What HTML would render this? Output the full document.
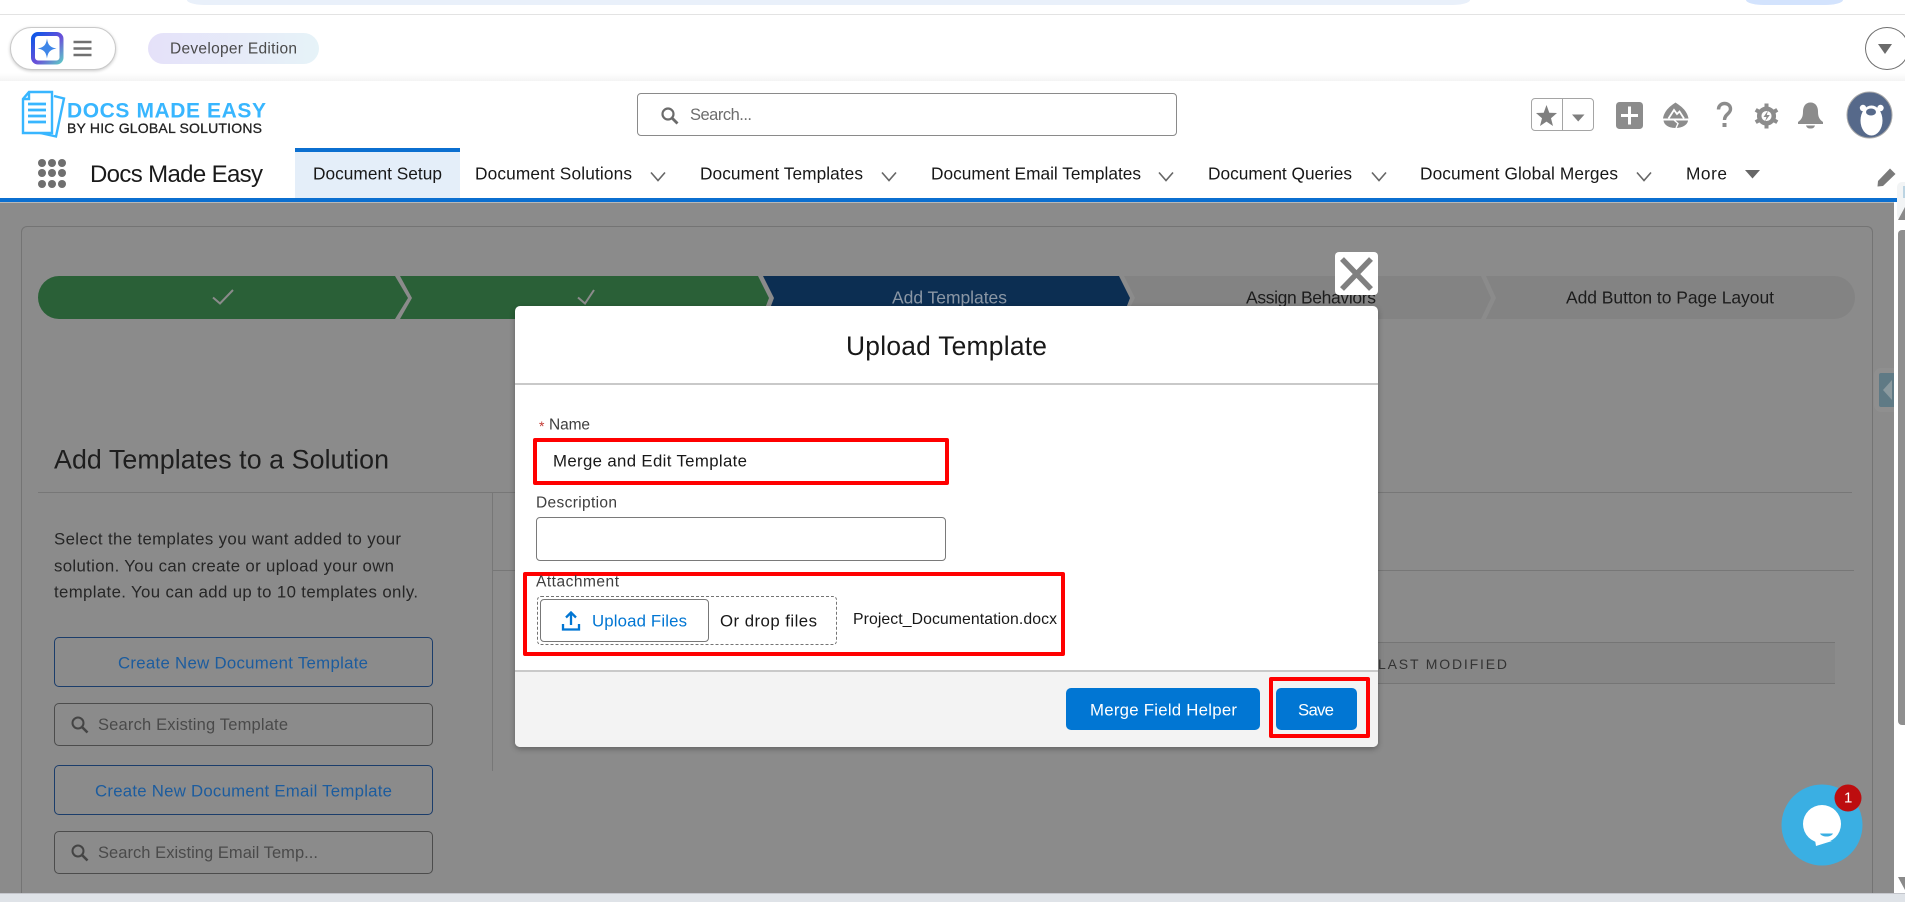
<!DOCTYPE html>
<html><head><meta charset="utf-8"><title>Upload Template</title>
<style>
html,body{margin:0;padding:0;width:1905px;height:902px;overflow:hidden;background:#fff;font-family:"Liberation Sans",sans-serif}
.a{position:absolute;box-sizing:border-box}
.t{position:absolute;white-space:nowrap;line-height:1;transform:translateY(calc(-50% + 1px));color:#1c1c1c}
svg{position:absolute;overflow:visible}
.nav{font-size:17.300px;color:#181818}
.ln{background:#777}
</style></head><body>

<!-- browser top strip -->
<div class="a" style="left:187px;top:0;width:1283px;height:5px;background:#e9f0fa;border-radius:0 0 18px 18px / 0 0 5px 5px"></div>
<div class="a" style="left:1746px;top:0;width:97px;height:5px;background:#d3e3fd;border-radius:0 0 18px 18px / 0 0 5px 5px"></div>
<div class="a" style="left:0;top:14px;width:1905px;height:1px;background:#e3e3e3"></div>

<!-- setup strip -->
<div class="a" style="left:0;top:15px;width:1905px;height:66px;background:linear-gradient(#fff 0,#fff 88%,#f4f4f4 100%)"></div>
<div class="a" style="left:10px;top:27px;width:106px;height:43px;border:1px solid #c9c9c9;border-radius:22px;background:#fff;box-shadow:0 1px 3px rgba(0,0,0,.22)"></div>
<svg style="left:0;top:0" width="120" height="80">
<defs><linearGradient id="g1" x1="0" y1="0" x2="1" y2="1"><stop offset="0" stop-color="#0b57e8"/><stop offset=".55" stop-color="#6a4fd8"/><stop offset="1" stop-color="#5fc4c8"/></linearGradient></defs>
<rect x="33" y="34" width="28.500" height="28.500" rx="5" fill="#fff" stroke="url(#g1)" stroke-width="4"/>
<path d="M47 38.500C48 45 50 47.300 56.500 48.500C50 49.700 48 52 47 58.500C46 52 44 49.700 37.500 48.500C44 47.300 46 45 47 38.500Z" fill="#3f86e8"/>
<path d="M73.500 42h18M73.500 48.500h18M73.500 55h18" stroke="#707070" stroke-width="2.600"/>
</svg>
<div class="a" style="left:148px;top:33px;width:171px;height:31px;border-radius:16px;background:linear-gradient(90deg,#e5e1f9,#e6f3f8)"></div>
<span class="t" style="left:170px;top:48px;font-size:15.500px;color:#4a4a4a;--w:127">Developer Edition</span>
<div class="a" style="left:1865px;top:27px;width:44px;height:43px;border:1px solid #6f6f6f;border-radius:50%;background:#fff"></div>
<svg style="left:1878px;top:44px" width="14" height="10"><path d="M0 0h14L7 10Z" fill="#6b6b6b"/></svg>

<!-- header logo -->
<svg style="left:18px;top:88px" width="50" height="54" fill="none" stroke="#38b6ff" stroke-width="2.400">
<path d="M36 8 L46 10.500 L38 48.500 L20 44.500"/>
<path d="M11 4H34V45H5V11Z" fill="#fff"/>
<path d="M11 4V11H5"/>
<path d="M10 16H28M10 22H28M10 28H28M10 34H28" stroke-width="2.800"/>
</svg>
<span class="t" style="left:67px;top:110px;font-size:21px;font-weight:700;color:#38b6ff;--w:199">DOCS MADE EASY</span>
<span class="t" style="left:67px;top:127px;font-size:14px;color:#222;-webkit-text-stroke:.3px #222;--w:195">BY HIC GLOBAL SOLUTIONS</span>

<!-- search -->
<div class="a" style="left:637px;top:93px;width:540px;height:43px;border:1px solid #8a8a8a;border-radius:4px;background:#fff"></div>
<svg style="left:660px;top:106px" width="20" height="20" fill="none" stroke="#6b6b6b"><circle cx="8" cy="8" r="5.500" stroke-width="2.200"/><path d="M12 12L17.500 17.500" stroke-width="2.800"/></svg>
<span class="t" style="left:690px;top:114px;font-size:16.500px;color:#6d6d6d;--w:62">Search...</span>

<!-- header icons -->
<div class="a" style="left:1531px;top:98px;width:63px;height:33px;border:1px solid #a5a5a5;border-radius:4px"></div>
<div class="a" style="left:1562px;top:98px;width:1px;height:33px;background:#a5a5a5"></div>
<svg style="left:1525px;top:88px" width="380" height="60">
<path d="M21.500 17L24.300 24.800L32 25L26 30.200L28 38L21.500 33.600L15 38L17 30.200L11 25L18.700 24.800Z" fill="#7f7f7f"/>
<path d="M47 26.500H59.500L53.200 33.500Z" fill="#7f7f7f"/>
<rect x="91" y="14" width="27" height="27" rx="3.500" fill="#8c8c8c"/>
<path d="M104.500 18.500V36.500M96 27.500H113" stroke="#fff" stroke-width="3"/>
<!-- trailhead -->
<path d="M150.500 14.500C155 17.500 162 22 163.500 30.500H138C139.500 22 146 17.500 150.500 14.500Z" fill="#8c8c8c"/>
<path d="M143.500 30.500L149 22L152 26L154.500 23.500L159 30.500" fill="none" stroke="#fff" stroke-width="1.800"/>
<path d="M138.500 32.500H163C162.500 37 157 40 150.500 40C144 40 139 37 138.500 32.500Z" fill="#8c8c8c"/>
<path d="M149 32L153 35.500L151 40" fill="none" stroke="#fff" stroke-width="1.400"/>
<!-- question -->
<path d="M193.500 21.500C193.500 17.500 196.500 15.500 199.500 15.500C203 15.500 205.500 17.800 205.500 21C205.500 26 199.500 26 199.500 32" fill="none" stroke="#8c8c8c" stroke-width="3.400"/>
<rect x="197.500" y="35" width="4" height="4" fill="#8c8c8c"/>
<!-- gear -->
<circle cx="241.500" cy="28" r="7.300" fill="none" stroke="#8c8c8c" stroke-width="4.500"/>
<path d="M241.500 15.500V20M241.500 36V40.500M230.700 21.800L234.500 24M248.500 32L252.300 34.200M230.700 34.200L234.500 32M248.500 24L252.300 21.800" stroke="#8c8c8c" stroke-width="4"/>
<path d="M243 22.500L238.500 29H241.500L240 33.500L244.800 27H241.800Z" fill="#8c8c8c"/>
<!-- bell -->
<path d="M285.500 14.500C290.500 14.500 293 18.500 293 23.500C293 29 294.500 31.500 298 34V36H273V34C276.500 31.500 278 29 278 23.500C278 18.500 280.500 14.500 285.500 14.500Z" fill="#8c8c8c"/>
<path d="M281 37.500H290C289 40.500 287 40.500 285.500 40.500C284 40.500 282 40.500 281 37.500Z" fill="#8c8c8c"/>
<!-- avatar -->
<ellipse cx="344.500" cy="27" rx="22.500" ry="23" fill="#56698a" stroke="#a9a9a9" stroke-width="1"/>
<circle cx="338" cy="20" r="3.200" fill="#fff"/><circle cx="355.500" cy="20" r="3.200" fill="#fff"/>
<ellipse cx="346.500" cy="32.500" rx="11" ry="15" fill="#fff"/>
<ellipse cx="346" cy="24" rx="5" ry="3.500" fill="#56698a"/>
</svg>

<!-- nav -->
<svg style="left:36px;top:157px" width="32" height="32" fill="#6f6f6f">
<circle cx="6" cy="6" r="4"/><circle cx="16" cy="6" r="4"/><circle cx="26" cy="6" r="4"/>
<circle cx="6" cy="16" r="4"/><circle cx="16" cy="16" r="4"/><circle cx="26" cy="16" r="4"/>
<circle cx="6" cy="27" r="4"/><circle cx="16" cy="27" r="4"/><circle cx="26" cy="27" r="4"/>
</svg>
<span class="t" style="left:90px;top:174px;font-size:24px;color:#1a1a1a;--w:173">Docs Made Easy</span>
<div class="a" style="left:295px;top:148px;width:165px;height:50px;background:#e4eef9;border-top:4px solid #0b6fd0"></div>
<span class="t nav" style="left:313px;top:173px;--w:129">Document Setup</span>
<span class="t nav" style="left:475px;top:173px;--w:157">Document Solutions</span>
<span class="t nav" style="left:700px;top:173px;--w:163">Document Templates</span>
<span class="t nav" style="left:931px;top:173px;--w:210">Document Email Templates</span>
<span class="t nav" style="left:1208px;top:173px;--w:144">Document Queries</span>
<span class="t nav" style="left:1420px;top:173px;--w:198">Document Global Merges</span>
<span class="t nav" style="left:1686px;top:173px;--w:41">More</span>
<svg style="left:0;top:165px" width="1905" height="30" fill="none" stroke="#666" stroke-width="1.600">
<path d="M651 7.500L658 15.500L665 7.500M882 7.500L889 15.500L896 7.500M1159 7.500L1166 15.500L1173 7.500M1372 7.500L1379 15.500L1386 7.500M1637 7.500L1644 15.500L1651 7.500"/>
<path d="M1745 5H1760L1752.500 13.500Z" fill="#666" stroke="none"/>
<path d="M1890 3.500L1895.500 9L1883 21L1877.500 21.500L1878 16Z" fill="#7a7a7a" stroke="none"/>
</svg>
<div class="a" style="left:0;top:198px;width:1905px;height:4px;background:#0b6fd0"></div>

<!-- main backdrop -->
<div class="a" style="left:0;top:202px;width:1894px;height:691px;background:#8b8b8b;border-top:1px solid #b9b9b9"></div>
<!-- scrollbar -->
<div class="a" style="left:1894px;top:202px;width:11px;height:691px;background:#fff"></div>
<div class="a" style="left:1897px;top:182px;width:8px;height:38px;background:#f2f4f5;border-radius:5px 0 0 5px"></div>
<div class="a" style="left:1903px;top:186px;width:2px;height:12px;background:#bcd4e2"></div>
<svg style="left:1898px;top:207px" width="7" height="13"><path d="M7 0V13H0Z" fill="#8a8a8a"/></svg>
<div class="a" style="left:1898px;top:230px;width:7px;height:495px;background:#8f8f8f;border-radius:4px 0 0 4px"></div>
<svg style="left:1898px;top:877px" width="7" height="13"><path d="M0 0H7V13Z" fill="#8a8a8a"/></svg>

<!-- card -->
<div class="a" style="left:21px;top:226px;width:1852px;height:667px;border:1px solid #747474;border-bottom:0;border-radius:6px 6px 0 0"></div>
<div class="a" style="left:0;top:893px;width:1905px;height:9px;background:#dfe3e8;border-top:1px solid #c4c6cc"></div>

<!-- path -->
<svg style="left:0;top:0" width="1905" height="340">
<path d="M59 276H395L408 298L395 319H59A21 21.500 0 0 1 59 276Z" fill="#2a6037"/>
<path d="M400 276H758L769 298L761 319H400L412 298Z" fill="#2a6037"/>
<path d="M763 276H1119L1130 298L1122 319H766L774 298Z" fill="#0c2e52"/>
<path d="M1124 276H1481L1491 298L1481 319H1124L1135 298Z" fill="#838383"/>
<path d="M1486 276H1834A21 21.500 0 0 1 1834 319H1486L1496 298Z" fill="#838383"/>
<path d="M213 297.500L220 303.500L233 290M578 297.500L585 303.500L594 290" fill="none" stroke="#8b8b8b" stroke-width="2"/>
</svg>
<span class="t" style="left:892px;top:297px;font-size:17.500px;color:#8a96a4;--w:115">Add Templates</span>
<span class="t" style="left:1246px;top:297px;font-size:17.500px;--w:130">Assign Behaviors</span>
<span class="t" style="left:1566px;top:297px;font-size:17.500px;--w:208">Add Button to Page Layout</span>

<!-- left panel -->
<span class="t" style="left:54px;top:459px;font-size:26.800px;color:#1e1e1e;--w:335">Add Templates to a Solution</span>
<div class="a ln" style="left:38px;top:492px;width:1814px;height:1px"></div>
<div class="a ln" style="left:492px;top:492px;width:1px;height:279px"></div>
<div class="a ln" style="left:492px;top:570px;width:1362px;height:1px"></div>
<span class="t" style="left:54px;top:539px;font-size:16.800px;color:#262626;--w:347">Select the templates you want added to your</span>
<span class="t" style="left:54px;top:566px;font-size:16.800px;color:#262626;--w:340">solution. You can create or upload your own</span>
<span class="t" style="left:54px;top:592px;font-size:16.800px;color:#262626;--w:364">template. You can add up to 10 templates only.</span>

<div class="a" style="left:54px;top:637px;width:379px;height:50px;border:1px solid #1b3d6b;border-radius:5px"></div>
<span class="t" style="left:118px;top:663px;font-size:16.800px;color:#1c5c9e;--w:250">Create New Document Template</span>
<div class="a" style="left:54px;top:703px;width:379px;height:43px;border:1px solid #4c4c4c;border-radius:5px"></div>
<svg style="left:70px;top:715px" width="20" height="20" fill="none" stroke="#444"><circle cx="8" cy="8" r="5.500" stroke-width="2"/><path d="M12 12L17.500 17.500" stroke-width="2.600"/></svg>
<span class="t" style="left:98px;top:724px;font-size:16.500px;color:#4a4a4a;--w:190">Search Existing Template</span>
<div class="a" style="left:54px;top:765px;width:379px;height:50px;border:1px solid #1b3d6b;border-radius:5px"></div>
<span class="t" style="left:95px;top:791px;font-size:16.800px;color:#1c5c9e;--w:297">Create New Document Email Template</span>
<div class="a" style="left:54px;top:831px;width:379px;height:43px;border:1px solid #4c4c4c;border-radius:5px"></div>
<svg style="left:70px;top:843px" width="20" height="20" fill="none" stroke="#444"><circle cx="8" cy="8" r="5.500" stroke-width="2"/><path d="M12 12L17.500 17.500" stroke-width="2.600"/></svg>
<span class="t" style="left:98px;top:852px;font-size:16.500px;color:#4a4a4a;--w:220">Search Existing Email Temp...</span>

<!-- table header -->
<div class="a" style="left:1378px;top:642px;width:457px;height:42px;background:#868686;border-top:1px solid #757575;border-bottom:1px solid #757575"></div>
<span class="t" style="left:1378px;top:663px;font-size:14px;color:#333;--w:129">LAST MODIFIED</span>

<!-- side handle -->
<div class="a" style="left:1874px;top:368px;width:20px;height:44px;background:#8f8f8f;border-radius:7px 0 0 7px"></div>
<div class="a" style="left:1879px;top:373px;width:15px;height:34px;background:#5f7a85;border-radius:2px 0 0 2px"></div>
<svg style="left:1883px;top:380px" width="10" height="20"><path d="M9 0V20L0 10Z" fill="#8b9a9f"/></svg>

<!-- chat -->
<svg style="left:1770px;top:770px" width="100" height="100">
<circle cx="52" cy="55" r="40.500" fill="#3aafe3"/>
<circle cx="52" cy="54" r="19" fill="#fff"/>
<path d="M45 70L46 76L62 71Z" fill="#fff"/>
<path d="M50 63.500H63C61 67.500 52 67.500 50 63.500Z" fill="#3aafe3"/>
<circle cx="78" cy="28" r="13.500" fill="#bd0d0f"/>
</svg>
<span class="t" style="left:1844px;top:797px;font-size:15px;color:#fff;font-weight:400">1</span>

<!-- modal -->
<div class="a" style="left:1335px;top:252px;width:43px;height:43px;background:#fff;border-radius:4px"></div>
<svg style="left:1335px;top:252px" width="43" height="43"><path d="M7 7L36 37M36 7L7 37" stroke="#808080" stroke-width="5.500"/></svg>
<div class="a" style="left:515px;top:306px;width:863px;height:441px;background:#fff;border-radius:5px;box-shadow:0 2px 6px rgba(0,0,0,.3);overflow:hidden">
  <div class="a" style="left:0;top:77px;width:863px;height:2px;background:#c9c9c9"></div>
  <div class="a" style="left:0;top:364px;width:863px;height:77px;background:#f3f3f3;border-top:2px solid #c9c9c9"></div>
</div>
<span class="t" style="left:846px;top:345px;font-size:26.400px;color:#181818;--w:201">Upload Template</span>
<span class="t" style="left:539px;top:425px;font-size:14px;color:#c23934">*</span>
<span class="t" style="left:549px;top:424px;font-size:15.500px;color:#3e3e3e;--w:41">Name</span>
<div class="a" style="left:533px;top:438px;width:416px;height:47px;border:4px solid #f00;border-radius:2px;background:#fff"></div>
<span class="t" style="left:553px;top:461px;font-size:16.800px;color:#181818;--w:194">Merge and Edit Template</span>
<span class="t" style="left:536px;top:502px;font-size:15.500px;color:#3e3e3e;--w:81">Description</span>
<div class="a" style="left:536px;top:517px;width:410px;height:44px;border:1px solid #7a7a7a;border-radius:4px;background:#fff"></div>
<div class="a" style="left:523px;top:572px;width:542px;height:84px;border:4px solid #f00;border-radius:2px"></div>
<span class="t" style="left:536px;top:581px;font-size:15.500px;color:#3e3e3e;--w:83">Attachment</span>
<div class="a" style="left:537px;top:596px;width:300px;height:49px;border:1px dashed #747474;border-radius:4px"></div>
<div class="a" style="left:540px;top:599px;width:169px;height:43px;border:1px solid #777;border-radius:4px;background:#fff"></div>
<svg style="left:561px;top:610px" width="20" height="22" fill="none" stroke="#0176d3" stroke-width="2.300"><path d="M10 15V2.500M5 7.500L10 2.500L15 7.500"/><path d="M2 14V19.500H18V14"/></svg>
<span class="t" style="left:592px;top:621px;font-size:16.800px;color:#0176d3;--w:95">Upload Files</span>
<span class="t" style="left:720px;top:621px;font-size:16.800px;color:#181818;--w:97">Or drop files</span>
<span class="t" style="left:853px;top:619px;font-size:15.800px;color:#181818;--w:204">Project_Documentation.docx</span>
<div class="a" style="left:1066px;top:688px;width:194px;height:42px;background:#0176d3;border-radius:5px"></div>
<span class="t" style="left:1090px;top:710px;font-size:16.800px;color:#fff;--w:147">Merge Field Helper</span>
<div class="a" style="left:1276px;top:688px;width:81px;height:42px;background:#0176d3;border-radius:5px"></div>
<span class="t" style="left:1298px;top:710px;font-size:16.800px;color:#fff;--w:36">Save</span>
<div class="a" style="left:1269px;top:677px;width:101px;height:61px;border:4px solid #f00;border-radius:2px"></div>

<script>
document.querySelectorAll('.t').forEach(function(e){
  var w=parseFloat(getComputedStyle(e).getPropertyValue('--w'));
  if(!w)return;
  e.style.letterSpacing='0px';
  var m=e.getBoundingClientRect().width,n=e.textContent.length;
  if(n>1)e.style.letterSpacing=((w-m)/(n-1))+'px';
});
</script>
</body></html>
